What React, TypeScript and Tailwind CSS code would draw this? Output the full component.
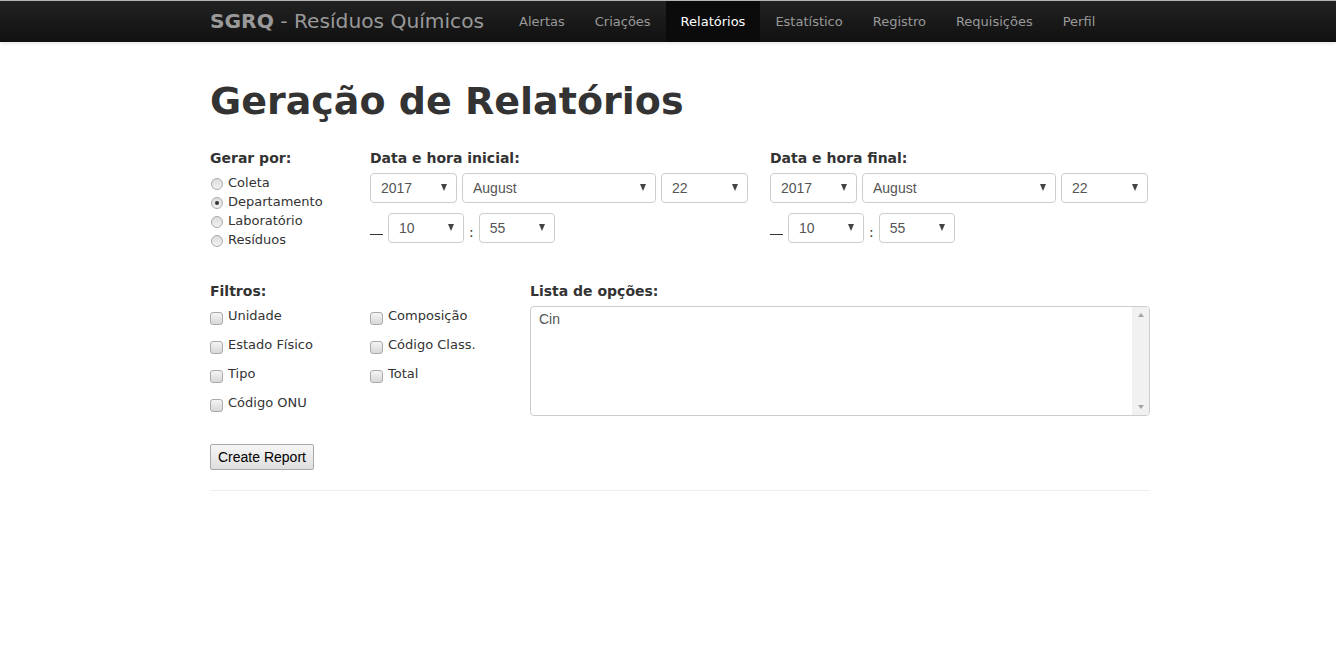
const navItems = ["Alertas", "Criações", "Relatórios", "Estatístico", "Registro", "Requisições", "Perfil"]

const Select = ({ value, width }: { value: string; width: string }) => {
  return (
    <div className={`relative h-[30px] ${width} rounded-[4px] border border-[#ccc] bg-white flex items-center pl-[10px] text-[14px] text-[#555] font-['Liberation_Sans',Arial,sans-serif]`}>
      <span>{value}</span>
      <span className="absolute right-[9px] top-[10px] w-0 h-0 border-l-[3.5px] border-r-[3.5px] border-t-[7px] border-l-transparent border-r-transparent border-t-[#444]"></span>
    </div>
  )
}

const Radio = ({ label, checked }: { label: string; checked?: boolean }) => {
  return (
    <div className="flex items-center h-[19px]">
      <span className="w-[12px] h-[12px] ml-[1px] mt-[3px] rounded-full border border-[#a9a9a9] bg-gradient-to-b from-[#dcdcdc] to-[#f2f2f2] flex items-center justify-center">
        {checked && <span className="w-[4px] h-[4px] rounded-full bg-[#333]"></span>}
      </span>
      <span className="ml-[5px]">{label}</span>
    </div>
  )
}

const Check = ({ label }: { label: string }) => {
  return (
    <div className="flex items-center h-[19px]">
      <span className="w-[13px] h-[13px] mt-[5px] rounded-[3px] border border-[#a9a9a9] bg-gradient-to-b from-[#f4f4f4] to-[#d8d8d8]"></span>
      <span className="ml-[5px]">{label}</span>
    </div>
  )
}

const DateTime = ({ title }: { title: string }) => {
  return (
    <div className="flex flex-col">
      <label className="text-[14px] leading-[20px] font-bold">{title}</label>
      <div className="flex gap-x-[5px] mt-[5px]">
        <Select value="2017" width="w-[87px]" />
        <Select value="August" width="w-[194px]" />
        <Select value="22" width="w-[87px]" />
      </div>
      <div className="flex items-center mt-[10px]">
        <span className="w-[13px] h-[1.5px] bg-[#333] mt-[13px]"></span>
        <div className="ml-[5px]">
          <Select value="10" width="w-[76px]" />
        </div>
        <span className="mx-[5px] mt-[8px] text-[14px]">:</span>
        <Select value="55" width="w-[76px]" />
      </div>
    </div>
  )
}

export default function App() {
  return (
    <div className="min-h-[662px] bg-white text-[#333] font-['DejaVu_Sans',Verdana,sans-serif]">
      <div className="h-[42px] border-t border-[#b5b5b5] bg-gradient-to-b from-[#222] to-[#111] shadow-[0_1px_4px_rgba(0,0,0,0.12)]">
        <div className="ml-[210px] flex h-[41px]">
          <div className="text-[20.2px] leading-[41px] text-[#999] pr-[20px]">
            <span className="font-bold">SGRQ</span> - Resíduos Químicos
          </div>
          <nav className="flex">
            {navItems.map((item) => (
              <div
                key={item}
                className={`px-[15px] text-[13px] leading-[41px] ${item === "Relatórios" ? "bg-[#0b0b0b] text-white" : "text-[#999]"}`}
              >
                {item}
              </div>
            ))}
          </nav>
        </div>
      </div>

      <div className="ml-[210px] w-[940px] pt-[35px]">
        <h1 className="text-[38px] leading-[48px] font-bold">Geração de Relatórios</h1>

        <div className="flex mt-[23px]">
          <div className="w-[160px] flex flex-col">
            <label className="text-[14px] leading-[20px] font-bold">Gerar por:</label>
            <div className="flex flex-col mt-[5px] text-[13px]">
              <Radio label="Coleta" />
              <Radio label="Departamento" checked />
              <Radio label="Laboratório" />
              <Radio label="Resíduos" />
            </div>
          </div>
          <div className="w-[400px]">
            <DateTime title="Data e hora inicial:" />
          </div>
          <div>
            <DateTime title="Data e hora final:" />
          </div>
        </div>

        <div className="flex mt-[32px]">
          <div className="w-[320px] flex flex-col">
            <label className="text-[14px] leading-[20px] font-bold">Filtros:</label>
            <div className="grid grid-cols-[160px_160px] gap-y-[10px] mt-[5px] text-[13px]">
              <Check label="Unidade" />
              <Check label="Composição" />
              <Check label="Estado Físico" />
              <Check label="Código Class." />
              <Check label="Tipo" />
              <Check label="Total" />
              <Check label="Código ONU" />
            </div>
          </div>
          <div className="flex-1 flex flex-col">
            <label className="text-[14px] leading-[20px] font-bold">Lista de opções:</label>
            <div className="mt-[5px] h-[110px] rounded-[4px] border border-[#ccc] flex overflow-hidden">
              <div className="flex-1 pl-[8px] pt-[2px] text-[14px] text-[#555] font-['Liberation_Sans',Arial,sans-serif]">Cin</div>
              <div className="w-[17px] bg-[#f1f1f1] flex flex-col justify-between items-center py-[6px]">
                <span className="w-0 h-0 border-l-[3.5px] border-r-[3.5px] border-b-[4px] border-l-transparent border-r-transparent border-b-[#a3a3a3]"></span>
                <span className="w-0 h-0 border-l-[3.5px] border-r-[3.5px] border-t-[4px] border-l-transparent border-r-transparent border-t-[#a3a3a3]"></span>
              </div>
            </div>
          </div>
        </div>

        <button className="mt-[28px] h-[26px] px-[7px] border border-[#a8a8a8] rounded-[2px] bg-gradient-to-b from-[#f6f6f6] to-[#dedede] text-[14px] text-black font-['Liberation_Sans',Arial,sans-serif]">
          Create Report
        </button>

        <hr className="mt-[20px] border-t border-[#eee]" />
      </div>
    </div>
  )
}
